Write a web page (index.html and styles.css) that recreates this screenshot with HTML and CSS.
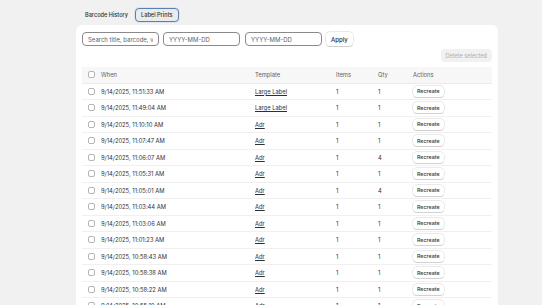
FILE: index.html
```html
<!DOCTYPE html>
<html lang="en">
<head>
    <meta charset="UTF-8">
    <title>Label Prints</title>
    <link rel="stylesheet" href="styles.css">
</head>
<body>
    <div class="page">
        <nav class="tabs">
            <button class="tab">Barcode History</button>
            <button class="tab tab-active">Label Prints</button>
        </nav>

        <section class="card">
            <div class="filters">
                <input class="field field-search" type="text" placeholder="Search title, barcode, variant">
                <input class="field" type="text" placeholder="YYYY-MM-DD">
                <input class="field field-to" type="text" placeholder="YYYY-MM-DD">
                <button class="btn">Apply</button>
            </div>

            <div class="bulk">
                <button class="btn btn-disabled" disabled>Delete selected</button>
            </div>

            <table class="prints">
                <thead>
                    <tr>
                        <th class="col-check"><span class="checkbox"></span></th>
                        <th class="col-when">When</th>
                        <th class="col-template">Template</th>
                        <th class="col-items">Items</th>
                        <th class="col-qty">Qty</th>
                        <th>Actions</th>
                    </tr>
                </thead>
                <tbody>
                    <tr><td class="col-check"><span class="checkbox"></span></td><td>9/14/2025, 11:51:33 AM</td><td><a href="#">Large Label</a></td><td>1</td><td>1</td><td><button class="btn btn-small">Recreate</button></td></tr>
                    <tr><td class="col-check"><span class="checkbox"></span></td><td>9/14/2025, 11:49:04 AM</td><td><a href="#">Large Label</a></td><td>1</td><td>1</td><td><button class="btn btn-small">Recreate</button></td></tr>
                    <tr><td class="col-check"><span class="checkbox"></span></td><td>9/14/2025, 11:10:10 AM</td><td><a href="#">Adr</a></td><td>1</td><td>1</td><td><button class="btn btn-small">Recreate</button></td></tr>
                    <tr><td class="col-check"><span class="checkbox"></span></td><td>9/14/2025, 11:07:47 AM</td><td><a href="#">Adr</a></td><td>1</td><td>1</td><td><button class="btn btn-small">Recreate</button></td></tr>
                    <tr><td class="col-check"><span class="checkbox"></span></td><td>9/14/2025, 11:06:07 AM</td><td><a href="#">Adr</a></td><td>1</td><td>4</td><td><button class="btn btn-small">Recreate</button></td></tr>
                    <tr><td class="col-check"><span class="checkbox"></span></td><td>9/14/2025, 11:05:31 AM</td><td><a href="#">Adr</a></td><td>1</td><td>1</td><td><button class="btn btn-small">Recreate</button></td></tr>
                    <tr><td class="col-check"><span class="checkbox"></span></td><td>9/14/2025, 11:05:01 AM</td><td><a href="#">Adr</a></td><td>1</td><td>4</td><td><button class="btn btn-small">Recreate</button></td></tr>
                    <tr><td class="col-check"><span class="checkbox"></span></td><td>9/14/2025, 11:03:44 AM</td><td><a href="#">Adr</a></td><td>1</td><td>1</td><td><button class="btn btn-small">Recreate</button></td></tr>
                    <tr><td class="col-check"><span class="checkbox"></span></td><td>9/14/2025, 11:03:06 AM</td><td><a href="#">Adr</a></td><td>1</td><td>1</td><td><button class="btn btn-small">Recreate</button></td></tr>
                    <tr><td class="col-check"><span class="checkbox"></span></td><td>9/14/2025, 11:01:23 AM</td><td><a href="#">Adr</a></td><td>1</td><td>1</td><td><button class="btn btn-small">Recreate</button></td></tr>
                    <tr><td class="col-check"><span class="checkbox"></span></td><td>9/14/2025, 10:58:43 AM</td><td><a href="#">Adr</a></td><td>1</td><td>1</td><td><button class="btn btn-small">Recreate</button></td></tr>
                    <tr><td class="col-check"><span class="checkbox"></span></td><td>9/14/2025, 10:58:38 AM</td><td><a href="#">Adr</a></td><td>1</td><td>1</td><td><button class="btn btn-small">Recreate</button></td></tr>
                    <tr><td class="col-check"><span class="checkbox"></span></td><td>9/14/2025, 10:58:22 AM</td><td><a href="#">Adr</a></td><td>1</td><td>1</td><td><button class="btn btn-small">Recreate</button></td></tr>
                    <tr><td class="col-check"><span class="checkbox"></span></td><td>9/14/2025, 10:55:10 AM</td><td><a href="#">Adr</a></td><td>1</td><td>1</td><td><button class="btn btn-small">Recreate</button></td></tr>
                </tbody>
            </table>
        </section>
    </div>
</body>
</html>
```

FILE: styles.css
```css
body {
    margin: 0;
    background-color: #f1f1f1;
    font-family: Inter, "Noto Sans", sans-serif;
    color: #303030;
    overflow: hidden;
}
.page {
    padding: 8px 44px 0 76px;
}
.tabs {
    display: flex;
    align-items: center;
    gap: 1px;
    height: 14px;
    margin-bottom: 3px;
    padding-left: 3px;
}
.tab {
    font-family: inherit;
    font-size: 5.6px;
    font-weight: 500;
    color: #303030;
    background: none;
    border: 1px solid transparent;
    border-radius: 4px;
    height: 14px;
    padding: 0 5px;
}
.tab-active {
    background-color: #ebebeb;
    border: 1px solid #5a7fb5;
    box-shadow: 0 0 0 1px #dbe4f0;
}
.card {
    background: white;
    border-radius: 6px;
    padding: 7px 6px 0 6px;
    height: 300px;
    box-shadow: 0 1px 1px rgba(0, 0, 0, 0.04);
}
.filters {
    display: flex;
    gap: 4px;
    height: 14px;
}
.field {
    width: 77px;
    box-sizing: border-box;
    height: 14px;
    border: 1px solid #8a8a8a;
    border-radius: 4px;
    padding: 0 5px;
    font-family: inherit;
    font-size: 6px;
    color: #303030;
}
.field::placeholder {
    color: #616161;
}
.field-to {
    margin-left: 1px;
}
.btn {
    font-family: inherit;
    font-size: 6px;
    font-weight: 500;
    color: #303030;
    background: white;
    border: none;
    border-radius: 4px;
    box-shadow: 0 0 0 0.5px #d4d4d4, 0 1px 0 #cfcfcf;
    height: 14px;
    padding: 0 5px;
}
.bulk {
    display: flex;
    justify-content: flex-end;
    margin-top: 3px;
    height: 13px;
}
.btn-disabled {
    height: 13px;
    font-size: 5.6px;
    background-color: #f1f1f1;
    color: #b5b5b5;
    box-shadow: none;
}
.prints {
    width: 100%;
    border-collapse: collapse;
    margin-top: 5px;
    font-size: 5.8px;
    table-layout: fixed;
}
.prints th {
    background-color: #f7f7f7;
    color: #616161;
    font-weight: 400;
    text-align: left;
    height: 15.5px;
    padding: 0 0 0 3px;
    border-bottom: 1px solid #ebebeb;
}
.prints td {
    height: 15.5px;
    padding: 0 0 0 3px;
    border-bottom: 1px solid #f0f0f0;
}
.prints a {
    color: #303030;
}
.col-check {
    width: 10px;
}
.prints .col-check {
    padding-left: 6px;
}
.col-when {
    width: 151px;
}
.col-template {
    width: 78px;
}
.col-items {
    width: 39px;
}
.col-qty {
    width: 32px;
}
.checkbox {
    display: block;
    width: 5px;
    height: 5px;
    border: 1px solid #b5b5b5;
    border-radius: 2px;
    background: white;
}
.btn-small {
    height: 11px;
    font-size: 5.3px;
    padding: 0 4px;
}
```
